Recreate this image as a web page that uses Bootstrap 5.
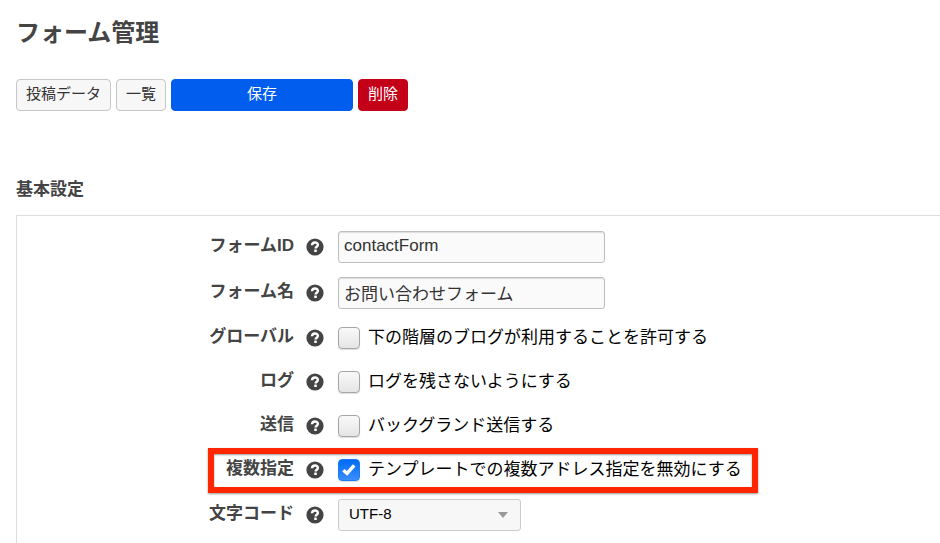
<!DOCTYPE html>
<html lang="ja">
<head>
<meta charset="utf-8">
<meta name="viewport" content="width=device-width, initial-scale=1">
<title>フォーム管理</title>
<link href="https://cdn.jsdelivr.net/npm/bootstrap@5.3.0/dist/css/bootstrap.min.css" rel="stylesheet">
<style>
body { font-family: "Liberation Sans", "Noto Sans CJK JP", sans-serif; font-size: 17px; line-height: 24px; color: #000; background: #fff; overflow-x: hidden; }
.page { padding: 15px 0 0 16px; }
.page-title { font-size: 24px; line-height: 36px; color: #444; margin-bottom: 28px; }
.actions { gap: 5px; margin-bottom: 67px; }
.actions .btn { font-size: 15px; line-height: 20px; padding: 4px 9px 6px; height: 32px; border-radius: 4px; }
.btn-plain { --bs-btn-color: #333; --bs-btn-bg: #f7f7f7; --bs-btn-border-color: #c6c6c6; --bs-btn-hover-bg: #eee; --bs-btn-hover-border-color: #bbb; }
.btn-save { --bs-btn-color: #fff; --bs-btn-bg: #005dee; --bs-btn-border-color: #005dee; --bs-btn-hover-color: #fff; --bs-btn-hover-bg: #0050cc; width: 182px; }
.btn-remove { --bs-btn-color: #fff; --bs-btn-bg: #c40019; --bs-btn-border-color: #c40019; --bs-btn-hover-color: #fff; --bs-btn-hover-bg: #a80016; }
.section-title { font-size: 17px; line-height: 24px; color: #444; margin-bottom: 13px; }
.settings { border: 1px solid #ddd; border-right: 0; border-bottom: 0; padding: 15px 0 14px; display: flex; flex-direction: column; gap: 14px; }
.setting { min-height: 30px; }
.setting-name { flex: 0 0 277px; text-align: right; font-weight: 700; color: #444; padding-bottom: 2px; }
.help { border: 0; padding: 0; background: none; margin: 0 14px 0 12px; width: 18px; height: 18px; line-height: 0; }
.field { width: 267px; height: 32px; font-size: 17px; line-height: 24px; padding: 2px 5px 4px; color: #333; background: #fafafa; border: 1px solid #bfbfbf; border-radius: 3px; box-shadow: inset 0 1px 1px #ddd; }
.tick { appearance: none; flex: none; width: 22px; height: 22px; margin: 0; border: 1px solid #a6a6a6; border-radius: 4px; background: linear-gradient(#f9f9f9, #e5e5e5); box-shadow: 0 1px 1px #ddd; }
.tick:checked { border-color: #1d7bf2; background: url("data:image/svg+xml,%3Csvg xmlns='http://www.w3.org/2000/svg' viewBox='0 0 20 20'%3E%3Cpath d='M4.3 10.2l3.8 3.2L15.2 5.4' fill='none' stroke='%23fff' stroke-width='3.4'/%3E%3C/svg%3E") center / 20px no-repeat, linear-gradient(#006bf5, #3b8efc); }
.tick-text { padding: 0 0 1px 8px; }
.charset { width: 183px; height: 32px; font-size: 15px; line-height: 20px; padding: 4px 30px 6px 10px; color: #000; border: 1px solid #ccc; border-radius: 3px; background: #f7f7f7 url("data:image/svg+xml,%3Csvg xmlns='http://www.w3.org/2000/svg' viewBox='0 0 10 6'%3E%3Cpath d='M0 0h10L5 6z' fill='%23999'/%3E%3C/svg%3E") right 12px center / 10px 6px no-repeat; }
.callout { position: absolute; top: -7px; bottom: -8px; left: 191px; width: 550px; border: 6px solid #ff2600; box-shadow: 0 1px 2px #999, inset 0 1px 2px #999; pointer-events: none; }
</style>
<script src="https://cdn.jsdelivr.net/npm/bootstrap@5.3.0/dist/js/bootstrap.bundle.min.js" defer></script>
</head>
<body>
<svg class="d-none" aria-hidden="true">
  <symbol id="question" viewBox="0 0 18 18">
    <circle cx="9" cy="9" r="8.6" fill="#444"/>
    <path d="M6 7.2C6.1 5.4 7.3 4.5 9 4.5c1.7 0 2.9.9 2.9 2.3 0 1.9-2.3 1.9-2.3 3.7" fill="none" stroke="#fff" stroke-width="2.4"/>
    <rect x="8.2" y="11.6" width="2.6" height="2.5" rx=".5" fill="#fff"/>
  </symbol>
</svg>
<main class="page">
  <h1 class="page-title fw-bold">フォーム管理</h1>
  <div class="actions d-flex flex-wrap">
    <button type="button" class="btn btn-plain">投稿データ</button>
    <button type="button" class="btn btn-plain">一覧</button>
    <button type="submit" form="form-settings" class="btn btn-save">保存</button>
    <button type="button" class="btn btn-remove">削除</button>
  </div>
  <h2 class="section-title fw-bold">基本設定</h2>
  <form id="form-settings" class="settings">
    <div class="setting d-flex align-items-center">
      <label class="setting-name" for="form-id">フォームID</label>
      <button type="button" class="help" aria-label="ヘルプ"><svg width="18" height="18"><use href="#question"/></svg></button>
      <input type="text" class="field" id="form-id" value="contactForm">
    </div>
    <div class="setting d-flex align-items-center">
      <label class="setting-name" for="form-name">フォーム名</label>
      <button type="button" class="help" aria-label="ヘルプ"><svg width="18" height="18"><use href="#question"/></svg></button>
      <input type="text" class="field" id="form-name" value="お問い合わせフォーム">
    </div>
    <div class="setting d-flex align-items-center">
      <span class="setting-name">グローバル</span>
      <button type="button" class="help" aria-label="ヘルプ"><svg width="18" height="18"><use href="#question"/></svg></button>
      <input type="checkbox" class="tick" id="global">
      <label class="tick-text" for="global">下の階層のブログが利用することを許可する</label>
    </div>
    <div class="setting d-flex align-items-center">
      <span class="setting-name">ログ</span>
      <button type="button" class="help" aria-label="ヘルプ"><svg width="18" height="18"><use href="#question"/></svg></button>
      <input type="checkbox" class="tick" id="log">
      <label class="tick-text" for="log">ログを残さないようにする</label>
    </div>
    <div class="setting d-flex align-items-center">
      <span class="setting-name">送信</span>
      <button type="button" class="help" aria-label="ヘルプ"><svg width="18" height="18"><use href="#question"/></svg></button>
      <input type="checkbox" class="tick" id="background">
      <label class="tick-text" for="background">バックグランド送信する</label>
    </div>
    <div class="setting d-flex align-items-center position-relative">
      <span class="setting-name">複数指定</span>
      <button type="button" class="help" aria-label="ヘルプ"><svg width="18" height="18"><use href="#question"/></svg></button>
      <input type="checkbox" class="tick" id="multiple" checked>
      <label class="tick-text" for="multiple">テンプレートでの複数アドレス指定を無効にする</label>
      <div class="callout"></div>
    </div>
    <div class="setting d-flex align-items-center">
      <label class="setting-name" for="charset">文字コード</label>
      <button type="button" class="help" aria-label="ヘルプ"><svg width="18" height="18"><use href="#question"/></svg></button>
      <select class="form-select charset" id="charset"><option>UTF-8</option></select>
    </div>
  </form>
</main>
</body>
</html>
